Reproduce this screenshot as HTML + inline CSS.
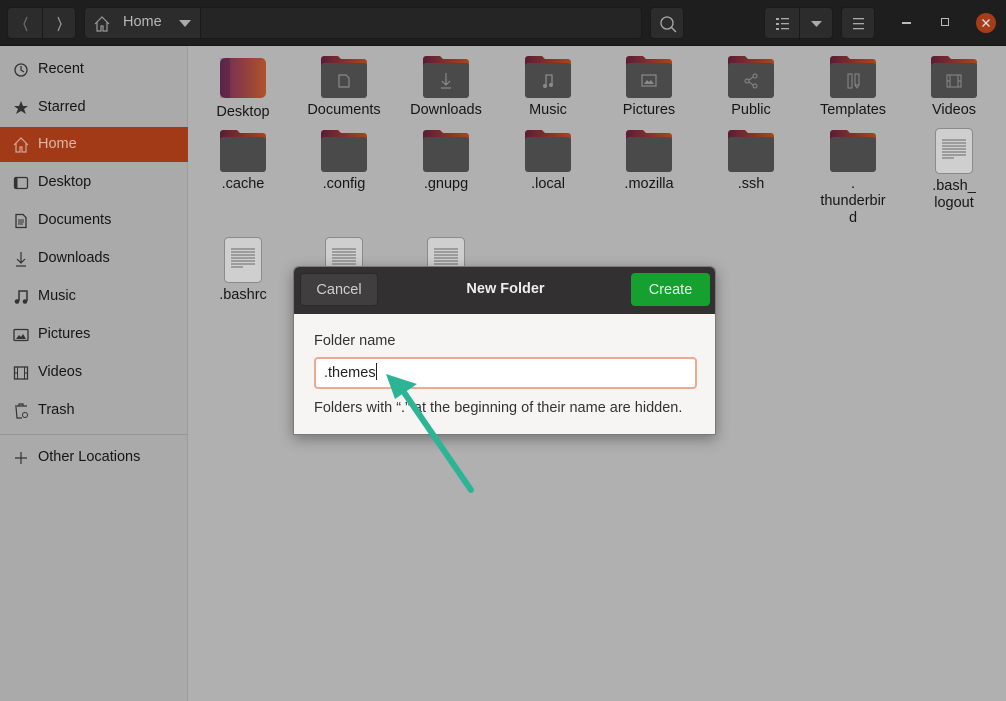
<!DOCTYPE html>
<html><head><meta charset="utf-8"><style>
*{margin:0;padding:0;box-sizing:border-box}
body{width:1006px;height:701px;overflow:hidden;background:#b0b0b0;font-family:"Liberation Sans",sans-serif;position:relative;color:#1a1a1a}
.hdr{position:absolute;left:0;top:0;width:1006px;height:46px;background:#1f1e1e;border-bottom:1px solid #151515}
.btn{position:absolute;background:#2d2c2c;border:1px solid #1a1a1a;border-radius:4px}
.side{position:absolute;left:0;top:46px;width:188px;height:655px;background:#aaaaaa;border-right:1px solid #9c9c9c}
.si{position:absolute;left:0;width:188px;height:35px;font-size:14.5px;line-height:35px;padding-left:38px;color:#161616}
.si svg{position:absolute;left:13px;top:10px}
.it{position:absolute;width:100px;text-align:center;font-size:14.5px;line-height:17px;color:#161616}
.it svg{display:block;margin:0 auto 4px}
.dlg{position:absolute;left:293px;top:266px;width:423px;height:169px;background:#f6f5f4;border:1px solid #7a7a7a;border-radius:6px 6px 0 0;box-shadow:0 4px 14px rgba(0,0,0,.35);overflow:hidden}
.dh{height:47px;background:#323030;position:relative}
</style></head><body>
<div class="hdr">
 <div class="btn" style="left:7px;top:7px;width:69px;height:32px"><div style="position:absolute;left:34px;top:0;width:1px;height:32px;background:#1a1a1a"></div>
  <svg width="69" height="32" style="position:absolute;left:0;top:0"><path d="M19 9l-3 7 3 7" stroke="#6e6e6e" stroke-width="1.2" fill="none"/><path d="M50 9l3 7-3 7" stroke="#999" stroke-width="1.2" fill="none"/></svg></div>
 <div class="btn" style="left:84px;top:7px;width:558px;height:32px;background:#262525">
  <div style="position:absolute;left:0;top:0;width:116px;height:30px;background:#2d2c2c;border-right:1px solid #1a1a1a;border-radius:4px 0 0 4px"></div>
  <svg width="20" height="20" style="position:absolute;left:7px;top:6px"><path d="M3 10L10 3l7 7M5 8v9h4v-5h2v5h4V8" stroke="#999" stroke-width="1.2" fill="none"/></svg>
  <span style="position:absolute;left:38px;top:6px;color:#b8b8b8;font-size:14.5px">Home</span>
  <svg width="14" height="10" style="position:absolute;left:93px;top:11px"><path d="M1 1h12L7 8z" fill="#aaa"/></svg>
 </div>
 <div class="btn" style="left:650px;top:7px;width:34px;height:32px"><svg width="34" height="32"><circle cx="16" cy="15" r="6" stroke="#aaa" stroke-width="1.3" fill="none"/><path d="M20 19l5 5" stroke="#aaa" stroke-width="1.4"/></svg></div>
 <div class="btn" style="left:764px;top:7px;width:69px;height:32px"><div style="position:absolute;left:34px;top:0;width:1px;height:32px;background:#1a1a1a"></div>
  <svg width="69" height="32"><g fill="#aaa"><rect x="11" y="10" width="3" height="2"/><rect x="11" y="15" width="3" height="2"/><rect x="11" y="20" width="3" height="2"/><rect x="16" y="10" width="8" height="1.3"/><rect x="16" y="15" width="8" height="1.3"/><rect x="16" y="20" width="8" height="1.3"/><path d="M46 13h11l-5.5 6z"/></g></svg></div>
 <div class="btn" style="left:841px;top:7px;width:34px;height:32px"><svg width="34" height="32" fill="#aaa"><rect x="11" y="10" width="11" height="1.3"/><rect x="11" y="15" width="11" height="1.3"/><rect x="11" y="20" width="11" height="1.3"/></svg></div>
 <div style="position:absolute;left:902px;top:22px;width:9px;height:1.5px;background:#bbb"></div>
 <div style="position:absolute;left:941px;top:18px;width:8px;height:8px;border:1.3px solid #bbb"></div>
 <div style="position:absolute;left:976px;top:13px;width:20px;height:20px;border-radius:50%;background:#a83c19"><svg width="20" height="20"><path d="M6.5 6.5l7 7M13.5 6.5l-7 7" stroke="#ddd" stroke-width="1.4"/></svg></div>
</div>

<div class="side">
 <div class="si" style="top:6px"><svg width="16" height="16"><circle cx="8" cy="8" r="6" stroke="#333" stroke-width="1.3" fill="none"/><path d="M8 4v4l3 2" stroke="#333" stroke-width="1.3" fill="none"/></svg>Recent</div>
 <div class="si" style="top:44px"><svg width="16" height="16"><path d="M8 1l2 5h5l-4 3 2 5-5-3-5 3 2-5-4-3h5z" fill="#333"/></svg>Starred</div>
 <div class="si" style="top:81px;background:#a23a18;color:#d8b8a8"><svg width="16" height="16"><path d="M1 8L8 1l7 7M3 6v9h4v-5h2v5h4V6" stroke="#d0a898" stroke-width="1.2" fill="none"/></svg>Home</div>
 <div class="si" style="top:119px"><svg width="16" height="16"><rect x="1.5" y="2.5" width="13" height="11" rx="1.5" stroke="#333" stroke-width="1.3" fill="none"/><rect x="1.5" y="2.5" width="3" height="11" fill="#333"/></svg>Desktop</div>
 <div class="si" style="top:157px"><svg width="16" height="16"><path d="M3 1.5h7l3 3v10H3z" stroke="#333" stroke-width="1.3" fill="none"/><path d="M5 7h6M5 9h6M5 11h5" stroke="#333"/></svg>Documents</div>
 <div class="si" style="top:195px"><svg width="16" height="16"><path d="M8 1v10M4 8l4 4 4-4M3 15h10" stroke="#333" stroke-width="1.2" fill="none"/></svg>Downloads</div>
 <div class="si" style="top:233px"><svg width="16" height="16"><path d="M6 12V2h8v10" stroke="#333" stroke-width="1.5" fill="none"/><circle cx="4" cy="12.5" r="2.3" fill="#333"/><circle cx="12" cy="12.5" r="2.3" fill="#333"/></svg>Music</div>
 <div class="si" style="top:271px"><svg width="16" height="16"><rect x="1" y="2.5" width="14" height="11" rx="1" stroke="#333" stroke-width="1.3" fill="none"/><path d="M3 12l3-4 2 2 2-3 3 5z" fill="#333"/></svg>Pictures</div>
 <div class="si" style="top:309px"><svg width="16" height="16"><rect x="1.5" y="2" width="13" height="12" stroke="#333" stroke-width="1.3" fill="none"/><path d="M4.5 2v12M11.5 2v12M1.5 8h3M11.5 8h3" stroke="#333"/></svg>Videos</div>
 <div class="si" style="top:347px"><svg width="16" height="16"><path d="M2 3h12M6 3V1h4v2M3 4l1 11h5" stroke="#333" stroke-width="1.2" fill="none"/><circle cx="12" cy="12" r="2.5" stroke="#333" fill="none"/></svg>Trash</div>
 <div style="position:absolute;left:0;top:388px;width:188px;height:1px;background:#959595"></div>
 <div class="si" style="top:394px"><svg width="16" height="16"><path d="M8 2v12M2 8h12" stroke="#333" stroke-width="1.2"/></svg>Other Locations</div>
</div>

<svg width="0" height="0" style="position:absolute"><defs>
<linearGradient id="tab" x1="0" x2="1"><stop offset="0" stop-color="#5c1c36"/><stop offset="1" stop-color="#a8461e"/></linearGradient>
<linearGradient id="dk" x1="0" x2="1"><stop offset="0" stop-color="#6b2a5a"/><stop offset="1" stop-color="#b0522a"/></linearGradient>
<symbol id="fold" viewBox="0 0 46 42"><path d="M3 0h14l3 3h23a3 3 0 0 1 3 3v10H0V3a3 3 0 0 1 3-3z" fill="url(#tab)"/><rect x="0" y="7" width="46" height="35" rx="3" fill="#4a4a4a"/></symbol>
<symbol id="file" viewBox="0 0 38 46"><rect x="0.5" y="0.5" width="37" height="45" rx="4" fill="#cfcfcf" stroke="#8a8a8a"/><g stroke="#6a6a6a"><path d="M7 12h24M7 15h24M7 18h24M7 21h24M7 24h24M7 27h24M7 30h12"/></g></symbol>
</defs></svg>

<div class="it" style="left:193px;top:58px"><svg width="46" height="40"><rect width="46" height="40" rx="5" fill="url(#dk)"/><rect width="10" height="40" fill="#000" opacity=".15"/></svg><div style="margin-top:6px">Desktop</div></div>
<div class="it" style="left:294px;top:56px"><svg width="46" height="42"><use href="#fold"/><path d="M18 19h7l3 3v9H18z" stroke="#8a8a8a" fill="none" stroke-width="1.2"/></svg>Documents</div>
<div class="it" style="left:396px;top:56px"><svg width="46" height="42"><use href="#fold"/><path d="M23 17v12M19 25l4 4 4-4M18 32h10" stroke="#8a8a8a" fill="none" stroke-width="1.2"/></svg>Downloads</div>
<div class="it" style="left:498px;top:56px"><svg width="46" height="42"><use href="#fold"/><path d="M21 30V19h6v10" stroke="#8a8a8a" fill="none" stroke-width="1.3"/><circle cx="20" cy="30" r="2" fill="#8a8a8a"/><circle cx="26" cy="29" r="2" fill="#8a8a8a"/></svg>Music</div>
<div class="it" style="left:599px;top:56px"><svg width="46" height="42"><use href="#fold"/><rect x="16" y="19" width="14" height="11" stroke="#8a8a8a" fill="none" stroke-width="1.2"/><path d="M18 28l3-4 2 2 2-2 3 4z" fill="#8a8a8a"/></svg>Pictures</div>
<div class="it" style="left:701px;top:56px"><svg width="46" height="42"><use href="#fold"/><g stroke="#8a8a8a" fill="none"><circle cx="19" cy="25" r="2"/><circle cx="27" cy="20" r="2"/><circle cx="27" cy="30" r="2"/><path d="M21 24l4-3M21 26l4 3"/></g></svg>Public</div>
<div class="it" style="left:803px;top:56px"><svg width="46" height="42"><use href="#fold"/><g stroke="#8a8a8a" fill="none"><rect x="18" y="18" width="4" height="14"/><rect x="25" y="18" width="4" height="11"/><path d="M25 29l2 3 2-3"/></g></svg>Templates</div>
<div class="it" style="left:904px;top:56px"><svg width="46" height="42"><use href="#fold"/><g stroke="#8a8a8a" fill="none"><rect x="16" y="19" width="14" height="12"/><path d="M19 19v12M27 19v12M16 25h3M27 25h3"/></g></svg>Videos</div>

<div class="it" style="left:193px;top:130px"><svg width="46" height="42"><use href="#fold"/></svg>.cache</div>
<div class="it" style="left:294px;top:130px"><svg width="46" height="42"><use href="#fold"/></svg>.config</div>
<div class="it" style="left:396px;top:130px"><svg width="46" height="42"><use href="#fold"/></svg>.gnupg</div>
<div class="it" style="left:498px;top:130px"><svg width="46" height="42"><use href="#fold"/></svg>.local</div>
<div class="it" style="left:599px;top:130px"><svg width="46" height="42"><use href="#fold"/></svg>.mozilla</div>
<div class="it" style="left:701px;top:130px"><svg width="46" height="42"><use href="#fold"/></svg>.ssh</div>
<div class="it" style="left:803px;top:130px"><svg width="46" height="42"><use href="#fold"/></svg>.<br>thunderbir<br>d</div>
<div class="it" style="left:904px;top:128px"><svg width="38" height="46"><use href="#file"/></svg>.bash_<br>logout</div>

<div class="it" style="left:193px;top:237px"><svg width="38" height="46"><use href="#file"/></svg>.bashrc</div>
<div class="it" style="left:294px;top:237px"><svg width="38" height="46"><use href="#file"/></svg></div>
<div class="it" style="left:396px;top:237px"><svg width="38" height="46"><use href="#file"/></svg></div>

<div class="dlg">
 <div class="dh">
  <div style="position:absolute;left:6px;top:6px;width:78px;height:33px;background:#403e3e;border:1px solid #2a2a2a;border-radius:4px;color:#cfcfcf;font-size:14.5px;line-height:33px;text-align:center">Cancel</div>
  <div style="position:absolute;left:0;width:423px;top:14px;text-align:center;color:#eee;font-weight:bold;font-size:14.5px">New Folder</div>
  <div style="position:absolute;left:337px;top:6px;width:79px;height:33px;background:#16a02f;border-radius:4px;color:#e8f5e8;font-size:14.5px;line-height:35px;text-align:center">Create</div>
 </div>
 <div style="position:absolute;left:20px;top:66px;font-size:14.5px;color:#333">Folder name</div>
 <div style="position:absolute;left:20px;top:90px;width:383px;height:32px;background:#fff;border:2px solid #f0a890;border-radius:4px;font-size:14.5px;line-height:28px;padding-left:8px;color:#222">.themes<span style="display:inline-block;width:1px;height:17px;background:#222;vertical-align:-3px"></span></div>
 <div style="position:absolute;left:20px;top:133px;font-size:14.5px;color:#333;white-space:nowrap">Folders with “.” at the beginning of their name are hidden.</div>
</div>

<svg width="1006" height="701" style="position:absolute;left:0;top:0;pointer-events:none"><path d="M471 490L401 388" stroke="#2db494" stroke-width="6" stroke-linecap="round"/><path d="M386 374l31 10-22 15z" fill="#2db494"/></svg>
</body></html>
